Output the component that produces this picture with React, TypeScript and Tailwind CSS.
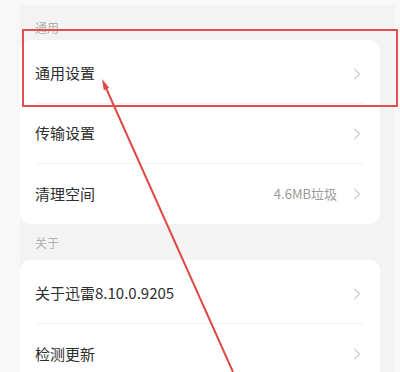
import { ChevronRight } from "lucide-react";

type Row = { label: string; value?: string };

const general: Row[] = [
  { label: "通用设置" },
  { label: "传输设置" },
  { label: "清理空间", value: "4.6MB垃圾" },
];

const about: Row[] = [{ label: "关于迅雷8.10.0.9205" }, { label: "检测更新" }];

function SettingsCard({ rows }: { rows: Row[] }) {
  return (
    <div className="bg-white rounded-[10px] pt-[4px] px-[15px]">
      {rows.map((row, i) => (
        <div
          key={row.label}
          className={`h-[60px] flex items-center justify-between ${i < rows.length - 1 ? "border-b border-[#f3f3f3]" : ""}`}
        >
          <span className="text-[15px] text-[#2e2e2e]">{row.label}</span>
          <div className="flex items-center gap-[10px]">
            {row.value && <span className="text-[13px] text-[#9a9a9a]">{row.value}</span>}
            <ChevronRight className="w-[20px] h-[20px] text-[#a8a8a8] -mr-[2px]" strokeWidth={1.2} />
          </div>
        </div>
      ))}
    </div>
  );
}

export default function App() {
  return (
    <div
      className="relative w-[400px] h-[372px] overflow-hidden bg-[#f8f8f8]"
      style={{ fontFamily: '"Noto Sans CJK SC", "Noto Sans", sans-serif' }}
    >
      <div className="ml-[20px] mt-[5px] w-[375px] h-[367px] bg-[#f3f3f3] pr-[15px]">
        <div className="h-[35px] flex items-end pl-[15px] pb-[3px] text-[12px] text-[#b0b0b0]">通用</div>
        <SettingsCard rows={general} />
        <div className="h-[36px] flex items-center pl-[15px] pt-[2px] text-[12px] text-[#b0b0b0]">关于</div>
        <SettingsCard rows={about} />
      </div>

      {/* annotation overlay */}
      <div className="absolute left-[22px] top-[29px] w-[376px] h-[78px] border-2 border-[#e0504c]" />
      <svg className="absolute inset-0 pointer-events-none" width="400" height="372" viewBox="0 0 400 372">
        <line x1="106" y1="88" x2="233" y2="372" stroke="#dd4b45" strokeWidth="2" />
        <polygon points="102,79 109.2,87.8 103.8,90.2" fill="#dd4b45" />
      </svg>
    </div>
  );
}
